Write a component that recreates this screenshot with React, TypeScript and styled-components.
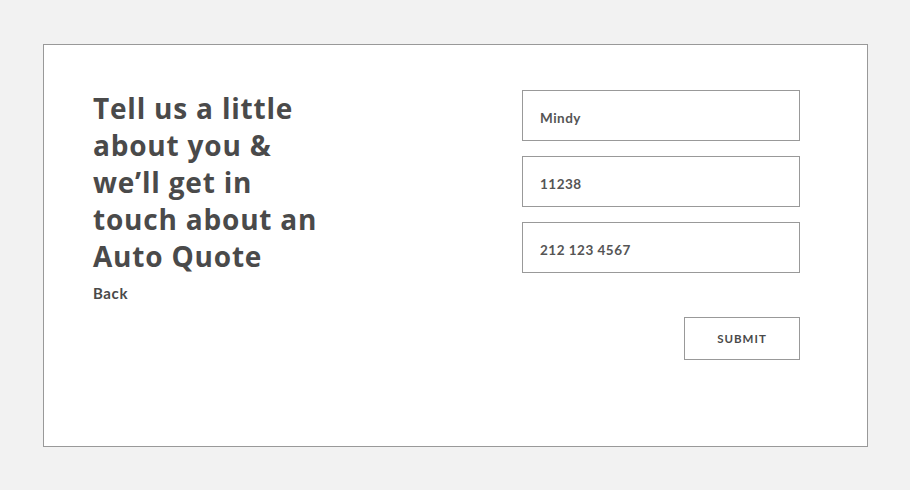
import styled, { createGlobalStyle } from "styled-components";

const GlobalStyle = createGlobalStyle`
  html, body {
    margin: 0;
    padding: 0;
    background: #f2f2f2;
  }
  * {
    box-sizing: border-box;
  }
`;

const Page = styled.div`
  padding: 44px 42px 43px 43px;
  font-family: Lato, "Liberation Sans", sans-serif;
  color: #4a4a4a;
`;

const Card = styled.section`
  height: 403px;
  background: #ffffff;
  border: 1px solid #999999;
  padding: 45px 67px 0 49px;
  display: flex;
  justify-content: space-between;
  align-items: flex-start;
`;

const Intro = styled.div`
  display: flex;
  flex-direction: column;
  gap: 9px;
`;

const Heading = styled.h1`
  margin: 0;
  font-family: "Open Sans", Lato, sans-serif;
  font-size: 28px;
  line-height: 37px;
  font-weight: 700;
  letter-spacing: 0.8px;
  color: #4a4a4a;
`;

const BackLink = styled.a`
  font-size: 15px;
  font-weight: 700;
  letter-spacing: 0.6px;
  color: #4a4a4a;
  text-decoration: none;
  cursor: pointer;
`;

const Form = styled.form`
  width: 278px;
  display: flex;
  flex-direction: column;
  gap: 15px;
`;

const Field = styled.input`
  height: 51px;
  padding: 4px 17px 0;
  border: 1px solid #999999;
  border-radius: 0;
  background: #ffffff;
  font-family: Lato, "Liberation Sans", sans-serif;
  font-size: 13.5px;
  font-weight: 700;
  letter-spacing: 0.5px;
  color: #555555;
  outline: none;
`;

const Actions = styled.div`
  display: flex;
  justify-content: flex-end;
  margin-top: 29px;
`;

const SubmitButton = styled.button`
  width: 116px;
  height: 43px;
  border: 1px solid #999999;
  background: #ffffff;
  font-family: Lato, "Liberation Sans", sans-serif;
  font-size: 11.5px;
  font-weight: 700;
  letter-spacing: 1px;
  color: #4a4a4a;
  cursor: pointer;
`;

export default function App() {
  return (
    <>
      <GlobalStyle />
      <Page>
        <Card>
          <Intro>
            <Heading>
              Tell us a little
              <br />
              about you &amp;
              <br />
              we’ll get in
              <br />
              touch about an
              <br />
              Auto Quote
            </Heading>
            <BackLink>Back</BackLink>
          </Intro>
          <Form onSubmit={(e) => e.preventDefault()}>
            <Field type="text" defaultValue="Mindy" />
            <Field type="text" defaultValue="11238" />
            <Field type="tel" defaultValue="212 123 4567" />
            <Actions>
              <SubmitButton type="submit">SUBMIT</SubmitButton>
            </Actions>
          </Form>
        </Card>
      </Page>
    </>
  );
}
